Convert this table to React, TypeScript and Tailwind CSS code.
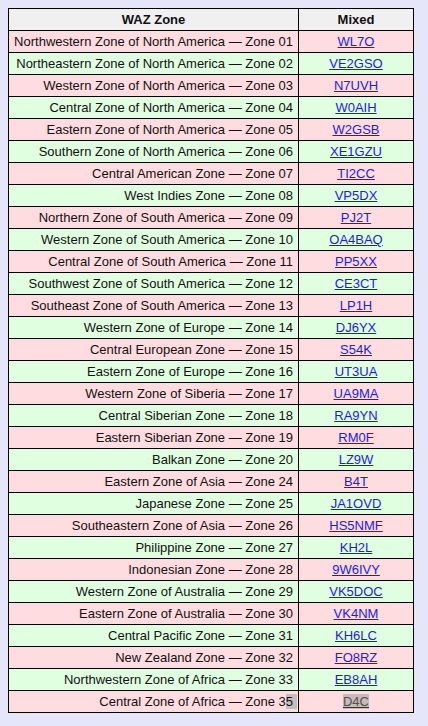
const ZONES: [string, string][] = [
  ["Northwestern Zone of North America — Zone 01", "WL7O"],
  ["Northeastern Zone of North America — Zone 02", "VE2GSO"],
  ["Western Zone of North America — Zone 03", "N7UVH"],
  ["Central Zone of North America — Zone 04", "W0AIH"],
  ["Eastern Zone of North America — Zone 05", "W2GSB"],
  ["Southern Zone of North America — Zone 06", "XE1GZU"],
  ["Central American Zone — Zone 07", "TI2CC"],
  ["West Indies Zone — Zone 08", "VP5DX"],
  ["Northern Zone of South America — Zone 09", "PJ2T"],
  ["Western Zone of South America — Zone 10", "OA4BAQ"],
  ["Central Zone of South America — Zone 11", "PP5XX"],
  ["Southwest Zone of South America — Zone 12", "CE3CT"],
  ["Southeast Zone of South America — Zone 13", "LP1H"],
  ["Western Zone of Europe — Zone 14", "DJ6YX"],
  ["Central European Zone — Zone 15", "S54K"],
  ["Eastern Zone of Europe — Zone 16", "UT3UA"],
  ["Western Zone of Siberia — Zone 17", "UA9MA"],
  ["Central Siberian Zone — Zone 18", "RA9YN"],
  ["Eastern Siberian Zone — Zone 19", "RM0F"],
  ["Balkan Zone — Zone 20", "LZ9W"],
  ["Eastern Zone of Asia — Zone 24", "B4T"],
  ["Japanese Zone — Zone 25", "JA1OVD"],
  ["Southeastern Zone of Asia — Zone 26", "HS5NMF"],
  ["Philippine Zone — Zone 27", "KH2L"],
  ["Indonesian Zone — Zone 28", "9W6IVY"],
  ["Western Zone of Australia — Zone 29", "VK5DOC"],
  ["Eastern Zone of Australia — Zone 30", "VK4NM"],
  ["Central Pacific Zone — Zone 31", "KH6LC"],
  ["New Zealand Zone — Zone 32", "FO8RZ"],
  ["Northwestern Zone of Africa — Zone 33", "EB8AH"],
];

export default function App() {
  return (
    <div className="min-h-[726px] bg-[#e6e6fa] p-2 text-[13px] text-[#111] [font-family:Arial,'Liberation_Sans',sans-serif]">
      <table className="w-[406px] table-fixed border-collapse border border-black">
        <thead>
          <tr className="bg-[#f0f0f0]">
            <th className="w-[290px] border border-black py-[2px] leading-[17px] font-bold">WAZ Zone</th>
            <th className="border border-black py-[2px] leading-[17px] font-bold">Mixed</th>
          </tr>
        </thead>
        <tbody>
          {ZONES.map(([zone, call], i) => (
            <tr key={zone} className={i % 2 === 0 ? "bg-[#ffdce0]" : "bg-[#e0ffe0]"}>
              <td className="border border-black py-[2px] pr-[5px] text-right leading-[17px] whitespace-nowrap">{zone}</td>
              <td className="border border-black py-[2px] text-center leading-[17px]">
                <a href="#" className="text-[#1a1aee] underline">{call}</a>
              </td>
            </tr>
          ))}
          {/* last row is partly selected in the screenshot */}
          <tr className="bg-[#ffdce0]">
            <td className="border border-black py-[2px] pr-[1px] text-right leading-[17px] whitespace-nowrap">
              Central Zone of Africa — Zone 3<span className="bg-[#c4bcbd] pr-[4px]">5</span>
            </td>
            <td className="border border-black py-[2px] text-center leading-[17px]">
              <a href="#" className="bg-[#c4bcbd] text-[#5c4e46] underline decoration-[#1a1aee]">D4C</a>
            </td>
          </tr>
        </tbody>
      </table>
    </div>
  );
}
